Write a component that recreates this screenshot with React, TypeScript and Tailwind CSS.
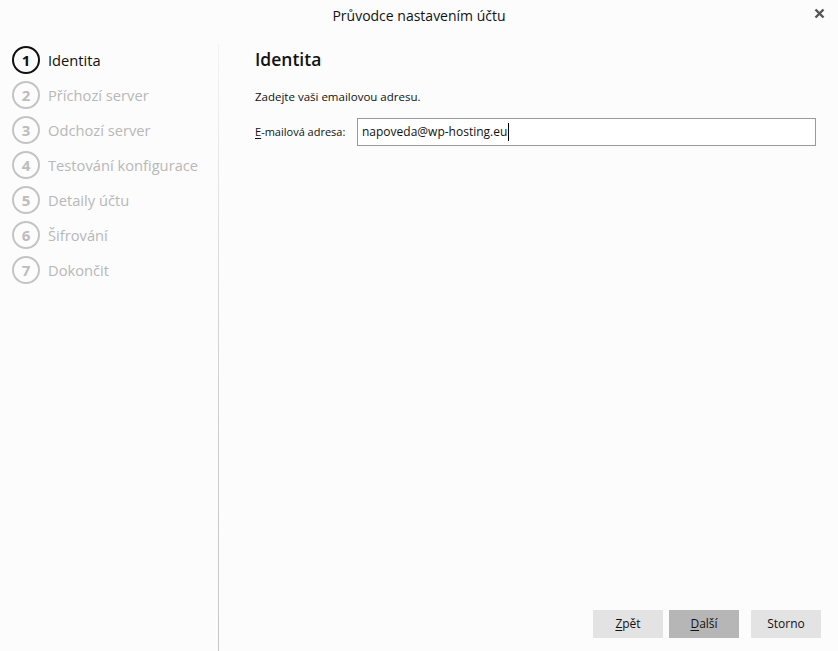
import React from "react";

const steps = [
  "Identita",
  "Příchozí server",
  "Odchozí server",
  "Testování konfigurace",
  "Detaily účtu",
  "Šifrování",
  "Dokončit",
];

const font = { fontFamily: '"Open Sans", "Noto Sans", "Liberation Sans", sans-serif' };

export default function App() {
  return (
    <div className="flex h-[651px] w-[838px] flex-col overflow-hidden bg-[#fcfcfc] text-[#1a1a1a]" style={font}>
      {/* Title bar */}
      <header className="relative flex h-[30px] shrink-0 items-center justify-center">
        <span className="text-[14px] text-[#111]">Průvodce nastavením účtu</span>
        <button className="absolute right-[10px] top-[4px] flex h-[18px] w-[18px] items-center justify-center text-[#555]" aria-label="Zavřít">
          <svg width="11" height="11" viewBox="0 0 11 11">
            <path d="M1.5 1.5 L9.5 9.5 M9.5 1.5 L1.5 9.5" stroke="currentColor" strokeWidth="2.4" />
          </svg>
        </button>
      </header>

      <div className="flex min-h-0 flex-1">
        {/* Steps sidebar */}
        <aside className="relative w-[219px] shrink-0 pl-[12px] pt-[16px]">
          <div className="absolute right-0 top-[14px] bottom-0 w-px bg-gradient-to-b from-[#f3f3f3] via-[#d2d2d2] to-[#c6c6c6]" />
          <ul className="flex flex-col gap-[7px]">
            {steps.map((s, i) => {
              const active = i === 0;
              return (
                <li key={s} className="flex h-[28px] items-center gap-[8px]">
                  <span
                    className={
                      active
                        ? "flex h-[28px] w-[28px] items-center justify-center rounded-full border-2 border-[#111] text-[15px] font-bold text-[#111]"
                        : "flex h-[28px] w-[28px] items-center justify-center rounded-full border-2 border-[#c4c4c4] text-[15px] font-bold text-[#bdbdbd]"
                    }
                  >
                    {i + 1}
                  </span>
                  <span className={active ? "text-[14.7px] text-[#111]" : "text-[14.7px] text-[#b8b8b8]"}>{s}</span>
                </li>
              );
            })}
          </ul>
        </aside>

        {/* Main content */}
        <main className="flex min-w-0 flex-1 flex-col pl-[36px] pr-[22px] pt-[16px] pb-[13px]">
          <h1 className="text-[17.5px] font-semibold leading-[26px] text-[#111]">Identita</h1>
          <p className="mt-[16px] text-[11.5px] text-[#111]">Zadejte vaši emailovou adresu.</p>
          <div className="mt-[13px] flex items-center">
            <label className="w-[102px] text-[11px] text-[#111]">
              <span className="underline underline-offset-2">E</span>-mailová adresa:
            </label>
            <div className="flex h-[28px] flex-1 items-center border border-[#9a9a9a] bg-white px-[4px] text-[12px] text-[#111]">
              napoveda@wp-hosting.eu
              <span className="ml-px inline-block h-[18px] w-px bg-black" />
            </div>
          </div>

          <div className="mt-auto -mr-[5px] flex justify-end gap-[6px]">
            <button className="h-[28px] w-[70px] bg-[#e3e3e3] text-[12px] text-[#111]">
              <span className="underline underline-offset-2">Z</span>pět
            </button>
            <button className="h-[28px] w-[70px] bg-[#b6b6b6] text-[12px] text-[#111]">
              <span className="underline underline-offset-2">D</span>alší
            </button>
            <button className="ml-[6px] h-[28px] w-[70px] bg-[#e3e3e3] text-[12px] text-[#111]">Storno</button>
          </div>
        </main>
      </div>
    </div>
  );
}
